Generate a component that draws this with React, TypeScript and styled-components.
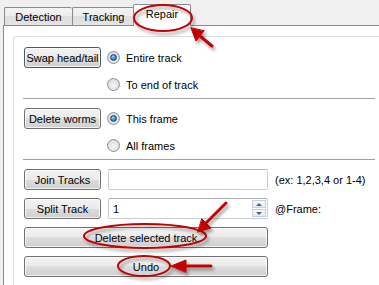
import React from 'react';
import styled, { createGlobalStyle } from 'styled-components';

const GlobalStyle = createGlobalStyle`
    body {
        margin: 0;
        background: #f0f0f0;
        font-family: "Liberation Sans", Arial, sans-serif;
        font-size: 11px;
        color: #000;
    }
`;

const Window = styled.div`
    position: relative;
    width: 379px;
    height: 285px;
    overflow: hidden;
    background: #f0f0f0;
    display: flex;
    flex-flow: column;
`;

const TabStrip = styled.div`
    display: flex;
    align-items: flex-end;
    height: 25px;
    padding-left: 4px;
    box-sizing: border-box;
`;

const Tab = styled.div<{ $width: number; $active?: boolean }>`
    box-sizing: border-box;
    width: ${(p) => p.$width}px;
    height: ${(p) => (p.$active ? 22 : 18)}px;
    margin-left: ${(p) => (p.$active ? -1 : 0)}px;
    margin-bottom: ${(p) => (p.$active ? -1 : 0)}px;
    border: 1px solid #898c95;
    border-bottom: ${(p) => (p.$active ? 'none' : '0')};
    border-right-width: ${(p) => (p.$active ? 1 : 0)}px;
    border-radius: 2px 2px 0 0;
    background: ${(p) =>
        p.$active ? '#fff' : 'linear-gradient(#f4f4f4 0%, #ececec 50%, #dfdfdf 50%, #e3e3e3 100%)'};
    position: relative;
    z-index: ${(p) => (p.$active ? 2 : 1)};
    display: flex;
    align-items: center;
    justify-content: center;
    padding-bottom: ${(p) => (p.$active ? 3 : 0)}px;
    &:nth-child(2) {
        border-right-width: 0;
    }
`;

const Page = styled.div`
    flex: 1;
    margin-left: 3px;
    background: #fff;
    border-left: 1px solid #898c95;
    border-top: 1px solid #898c95;
    overflow: hidden;
`;

const GroupBox = styled.div`
    margin: 10px 0 0 9px;
    width: 400px;
    height: 300px;
    border: 1px solid #d5dfe5;
    border-radius: 3px;
    padding-top: 1px;
`;

const OptionSection = styled.div`
    display: grid;
    grid-template-columns: 77px auto;
    grid-template-rows: 21px 21px;
    column-gap: 6px;
    row-gap: 6px;
    padding: 9px 0 3px 10px;
`;

const ToolsSection = styled.div`
    display: grid;
    grid-template-columns: 77px 160px auto;
    grid-auto-rows: 21px;
    column-gap: 7px;
    row-gap: 8px;
    padding: 9px 0 3px 10px;
`;

const Separator = styled.div`
    height: 1px;
    width: 352px;
    margin-left: 9px;
    background: #a0a0a0;
`;

const Button = styled.div<{ $wide?: boolean; $focused?: boolean }>`
    box-sizing: border-box;
    height: 21px;
    grid-column: ${(p) => (p.$wide ? '1 / 3' : 'auto')};
    border: 1px solid ${(p) => (p.$focused ? '#4b5b6b' : '#707070')};
    border-radius: 3px;
    background: linear-gradient(#f2f2f2 0%, #ebebeb 50%, #dddddd 50%, #cfcfcf 100%);
    box-shadow: inset 0 0 0 1px rgba(255, 255, 255, 0.75);
    display: flex;
    align-items: center;
    justify-content: center;
    white-space: nowrap;
`;

const RadioOption = styled.div`
    display: flex;
    align-items: center;
    gap: 6px;
    white-space: nowrap;
`;

const Radio = styled.span<{ $checked?: boolean }>`
    box-sizing: border-box;
    width: 13px;
    height: 13px;
    border-radius: 50%;
    border: 1px solid #8f8f8f;
    background: radial-gradient(circle at 50% 60%, #f5f5f5 0%, #e2e2e2 55%, #d2d2d2 100%);
    display: flex;
    align-items: center;
    justify-content: center;
    &::after {
        content: '';
        display: ${(p) => (p.$checked ? 'block' : 'none')};
        width: 7px;
        height: 7px;
        box-sizing: border-box;
        border-radius: 50%;
        border: 1px solid #1b4a7a;
        background: radial-gradient(circle at 40% 35%, #a9dbf6 0%, #3f8fd0 45%, #1a5c9c 100%);
    }
`;

const TextBox = styled.div`
    box-sizing: border-box;
    height: 21px;
    border: 1px solid #c8cdd4;
    border-top-color: #abadb3;
    border-radius: 2px;
    display: flex;
    align-items: center;
    padding-left: 4px;
    position: relative;
`;

const SpinButtons = styled.div`
    margin-left: auto;
    margin-right: 1px;
    width: 14px;
    height: 17px;
    display: flex;
    flex-flow: column;
    gap: 1px;
`;

const SpinHalf = styled.div<{ $down?: boolean }>`
    flex: 1;
    border: 1px solid #c6d0dc;
    background: linear-gradient(#f6f8fa, #e4eaf0);
    display: flex;
    align-items: center;
    justify-content: center;
    &::after {
        content: '';
        width: 0;
        height: 0;
        border-left: 3px solid transparent;
        border-right: 3px solid transparent;
        ${(p) => (p.$down ? 'border-top: 3px solid #4d6185;' : 'border-bottom: 3px solid #4d6185;')}
    }
`;

const Hint = styled.div`
    display: flex;
    align-items: center;
    white-space: nowrap;
`;

const Annotations = styled.svg`
    position: absolute;
    left: 0;
    top: 0;
    pointer-events: none;
    z-index: 5;
`;

const RED = '#c40000';

const App = () => {
    return (
        <>
            <GlobalStyle />
            <Window>
                <TabStrip>
                    <Tab $width={68}>Detection</Tab>
                    <Tab $width={62}>Tracking</Tab>
                    <Tab $width={58} $active>
                        Repair
                    </Tab>
                </TabStrip>
                <Page>
                    <GroupBox>
                        <OptionSection>
                            <Button $focused>Swap head/tail</Button>
                            <RadioOption>
                                <Radio $checked />
                                Entire track
                            </RadioOption>
                            <div />
                            <RadioOption>
                                <Radio />
                                To end of track
                            </RadioOption>
                        </OptionSection>
                        <Separator />
                        <OptionSection>
                            <Button>Delete worms</Button>
                            <RadioOption>
                                <Radio $checked />
                                This frame
                            </RadioOption>
                            <div />
                            <RadioOption>
                                <Radio />
                                All frames
                            </RadioOption>
                        </OptionSection>
                        <Separator />
                        <ToolsSection>
                            <Button>Join Tracks</Button>
                            <TextBox />
                            <Hint>(ex: 1,2,3,4 or 1-4)</Hint>
                            <Button>Split Track</Button>
                            <TextBox>
                                1
                                <SpinButtons>
                                    <SpinHalf />
                                    <SpinHalf $down />
                                </SpinButtons>
                            </TextBox>
                            <Hint>@Frame:</Hint>
                            <Button $wide>Delete selected track</Button>
                            <div />
                            <Button $wide>Undo</Button>
                        </ToolsSection>
                    </GroupBox>
                </Page>

                {/* red call-outs drawn over the dialog */}
                <Annotations width={379} height={285} viewBox="0 0 379 285">
                    <defs>
                        <filter id="shade" x="-20%" y="-20%" width="160%" height="160%">
                            <feDropShadow dx="2" dy="3" stdDeviation="1.6" floodColor="#000" floodOpacity="0.35" />
                        </filter>
                    </defs>
                    <g filter="url(#shade)" fill="none" stroke={RED} strokeWidth={2}>
                        <ellipse cx={163} cy={18} rx={29} ry={13} />
                        <ellipse cx={145} cy={236} rx={61} ry={12} />
                        <ellipse cx={144} cy={266} rx={26} ry={10} />
                    </g>
                    <g filter="url(#shade)" fill={RED} stroke={RED} strokeWidth={3} strokeLinecap="round">
                        <line x1={200} y1={36} x2={212} y2={46} />
                        <polygon points="191,28 196,41 204,31" strokeWidth={1} />
                        <line x1={206} y1={223} x2={226} y2={203} />
                        <polygon points="198,232 211,228 202,219" strokeWidth={1} />
                        <line x1={185} y1={266} x2={211} y2={266} />
                        <polygon points="171,266 186,260 186,272" strokeWidth={1} />
                    </g>
                </Annotations>
            </Window>
        </>
    );
};

export default App;
